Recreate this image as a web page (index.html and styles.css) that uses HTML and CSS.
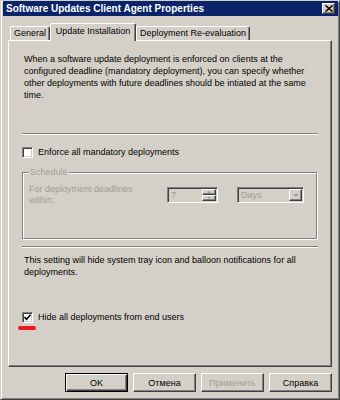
FILE: index.html
```html
<!DOCTYPE html>
<html lang="en">

<head>

    <meta charset="UTF-8">
    <meta name="viewport" content="width=device-width, initial-scale=1.0">
    <title>Software Updates Client Agent Properties</title>

    <link rel="stylesheet" href="styles.css">

</head>

<body>

    <div class="window">

        <div class="titlebar">
            <span class="title">Software Updates Client Agent Properties</span>
            <span class="close-btn">
                <svg width="8" height="7" viewBox="0 0 8 7">
                    <path d="M0.5 0.5L7.5 6.5M7.5 0.5L0.5 6.5" stroke="#000" stroke-width="1.5" fill="none" />
                </svg>
            </span>
        </div>

        <div class="content">

            <div class="tabs">
                <div class="tab tab-general">General</div>
                <div class="tab tab-active">Update Installation</div>
                <div class="tab tab-deploy">Deployment Re-evaluation</div>
            </div>

            <div class="panel">

                <p class="note">When a software update deployment is enforced on clients at the<br>configured deadline (mandatory deployment), you can specify whether<br>other deployments with future deadlines should be intiated at the same<br>time.</p>

                <div class="sep sep-top"></div>

                <div class="check-row check-enforce">
                    <span class="checkbox"></span>
                    <span>Enforce all mandatory deployments</span>
                </div>

                <div class="group">
                    <span class="legend">Schedule</span>
                    <div class="group-inner">
                        <div class="group-row">
                            <span class="group-label">For deployment deadlines<br>within:</span>
                            <div class="spin">
                                <span class="field-value">7</span>
                                <div class="spin-btns">
                                    <span class="spin-btn"><i class="arrow-up"></i></span>
                                    <span class="spin-btn"><i class="arrow-down"></i></span>
                                </div>
                            </div>
                            <div class="combo">
                                <span class="field-value">Days</span>
                                <span class="combo-btn"><i class="arrow-down arrow-big"></i></span>
                            </div>
                        </div>
                    </div>
                </div>

                <div class="sep sep-bottom"></div>

                <p class="note note-hide">This setting will hide system tray icon and balloon notifications for all<br>deployments.</p>

                <div class="check-row check-hide">
                    <span class="checkbox">
                        <svg width="7" height="7" viewBox="0 0 7 7">
                            <path d="M0.5 3L2.5 5.2L6.5 0.8" stroke="#000" stroke-width="1.6" fill="none" />
                        </svg>
                    </span>
                    <span>Hide all deployments from end users</span>
                </div>

                <div class="mark"></div>

            </div>

            <div class="buttons">
                <span class="btn btn-default">OK</span>
                <span class="btn">Отмена</span>
                <span class="btn btn-disabled">Применить</span>
                <span class="btn">Справка</span>
            </div>

        </div>

    </div>

</body>

</html>
```

FILE: styles.css
```css
html,
body {
    width: 100%;
    height: 100%;
    margin: 0px;
    overflow: hidden;
}

body {
    background-color: #d4d0c8;
    font-family: "Liberation Sans", Arial, sans-serif;
    font-size: 9px;
    color: #000;
}

.window {
    width: 340px;
    height: 400px;
    box-sizing: border-box;
    border: 1px solid;
    border-color: #d4d0c8 #404040 #404040 #d4d0c8;
    box-shadow: inset 1px 1px #fff, inset -1px -1px #808080;
    padding: 0 1px 0 2px;
}

.titlebar {
    height: 15px;
    background-color: #0a246a;
    color: #fff;
    font-weight: bold;
    font-size: 10px;
    display: flex;
    align-items: center;
    justify-content: space-between;
    padding: 0 3px 0 3px;
}

.close-btn {
    width: 13px;
    height: 11px;
    box-sizing: border-box;
    background-color: #d4d0c8;
    border: 1px solid;
    border-color: #fff #404040 #404040 #fff;
    box-shadow: inset -1px -1px #808080;
    display: flex;
    align-items: center;
    justify-content: center;
}

.close-btn svg {
    display: block;
}

.content {
    padding: 7px 6px 0 5px;
}

/* tabs */

.tabs {
    display: flex;
    align-items: flex-end;
    height: 17px;
    padding-left: 2px;
}

.tab {
    box-sizing: border-box;
    height: 14px;
    border: 1px solid;
    border-bottom: 0;
    border-color: #fff #404040 #fff #fff;
    box-shadow: inset -1px 0 #808080;
    border-radius: 2px 2px 0 0;
    text-align: center;
    line-height: 13px;
    white-space: nowrap;
}

.tab-general {
    width: 40px;
}

.tab-active {
    width: 86px;
    height: 18px;
    margin-bottom: -1px;
    line-height: 15px;
    background-color: #d4d0c8;
    position: relative;
    z-index: 1;
}

.tab-deploy {
    width: 114px;
}

.panel {
    height: 327px;
    box-sizing: border-box;
    border: 1px solid;
    border-color: #fff #404040 #404040 #fff;
    box-shadow: inset -1px -1px #808080;
    padding: 12px 13px 0 13px;
}

.note {
    margin: 0 2px;
    line-height: 12px;
}

.note-hide {
    margin-top: 6px;
}

.sep {
    border-top: 1px solid #808080;
    border-bottom: 1px solid #fff;
}

.sep-top {
    margin-top: 32px;
}

.sep-bottom {
    margin-top: 6px;
}

/* checkboxes */

.check-row {
    display: flex;
    align-items: center;
    gap: 5px;
    line-height: 11px;
}

.check-enforce {
    margin-top: 12px;
}

.check-hide {
    margin-top: 34px;
}

.checkbox {
    flex: none;
    width: 11px;
    height: 11px;
    box-sizing: border-box;
    background-color: #fff;
    border: 1px solid;
    border-color: #808080 #fff #fff #808080;
    box-shadow: inset 1px 1px #404040, inset -1px -1px #d4d0c8;
    display: flex;
    align-items: center;
    justify-content: center;
}

.checkbox svg {
    display: block;
}

.mark {
    width: 18px;
    height: 4px;
    margin: 3px 0 0 -4px;
    background-color: #f0141e;
    border-radius: 3px;
}

/* schedule group */

.group {
    position: relative;
    margin-top: 14px;
    height: 68px;
    box-sizing: border-box;
    border: 1px solid;
    border-color: #808080 #fff #fff #808080;
}

.group-inner {
    height: 100%;
    box-sizing: border-box;
    border: 1px solid;
    border-color: #fff #808080 #808080 #fff;
    padding: 10px 0 0 5px;
}

.legend {
    position: absolute;
    top: -6px;
    left: 6px;
    padding: 0 1px;
    line-height: 11px;
    background-color: #d4d0c8;
    color: #a19d95;
}

.group-row {
    display: flex;
    align-items: center;
}

.group-label {
    width: 138px;
    line-height: 11px;
    color: #a19d95;
}

.spin,
.combo {
    height: 16px;
    box-sizing: border-box;
    border: 1px solid;
    border-color: #808080 #fff #fff #808080;
    box-shadow: inset 1px 1px #404040, inset -1px -1px #d4d0c8;
    display: flex;
    padding: 1px;
}

.spin {
    width: 51px;
    margin-right: 19px;
}

.combo {
    width: 67px;
}

.field-value {
    flex: 1;
    padding-left: 2px;
    line-height: 12px;
    color: #a19d95;
}

.spin-btns {
    width: 14px;
    display: flex;
    flex-direction: column;
}

.spin-btn,
.combo-btn {
    box-sizing: border-box;
    border: 1px solid;
    border-color: #fff #404040 #404040 #fff;
    box-shadow: inset -1px -1px #808080;
    display: flex;
    align-items: center;
    justify-content: center;
    background-color: #d4d0c8;
}

.spin-btn {
    flex: 1;
}

.combo-btn {
    width: 13px;
}

.arrow-up,
.arrow-down {
    width: 0;
    height: 0;
    border-left: 2px solid transparent;
    border-right: 2px solid transparent;
}

.arrow-up {
    border-bottom: 2px solid #a19d95;
}

.arrow-down {
    border-top: 2px solid #a19d95;
}

.arrow-big {
    border-left-width: 3px;
    border-right-width: 3px;
    border-top-width: 3px;
}

/* dialog buttons */

.buttons {
    display: flex;
    justify-content: flex-end;
    gap: 5px;
    margin-top: 6px;
}

.btn {
    width: 63px;
    height: 19px;
    box-sizing: border-box;
    border: 1px solid;
    border-color: #fff #404040 #404040 #fff;
    box-shadow: inset -1px -1px #808080;
    display: flex;
    align-items: center;
    justify-content: center;
}

.btn-default {
    border-color: #000;
    box-shadow: inset 1px 1px #fff, inset -1px -1px #404040, inset -2px -2px #808080;
}

.btn-disabled {
    color: #a19d95;
}
```
